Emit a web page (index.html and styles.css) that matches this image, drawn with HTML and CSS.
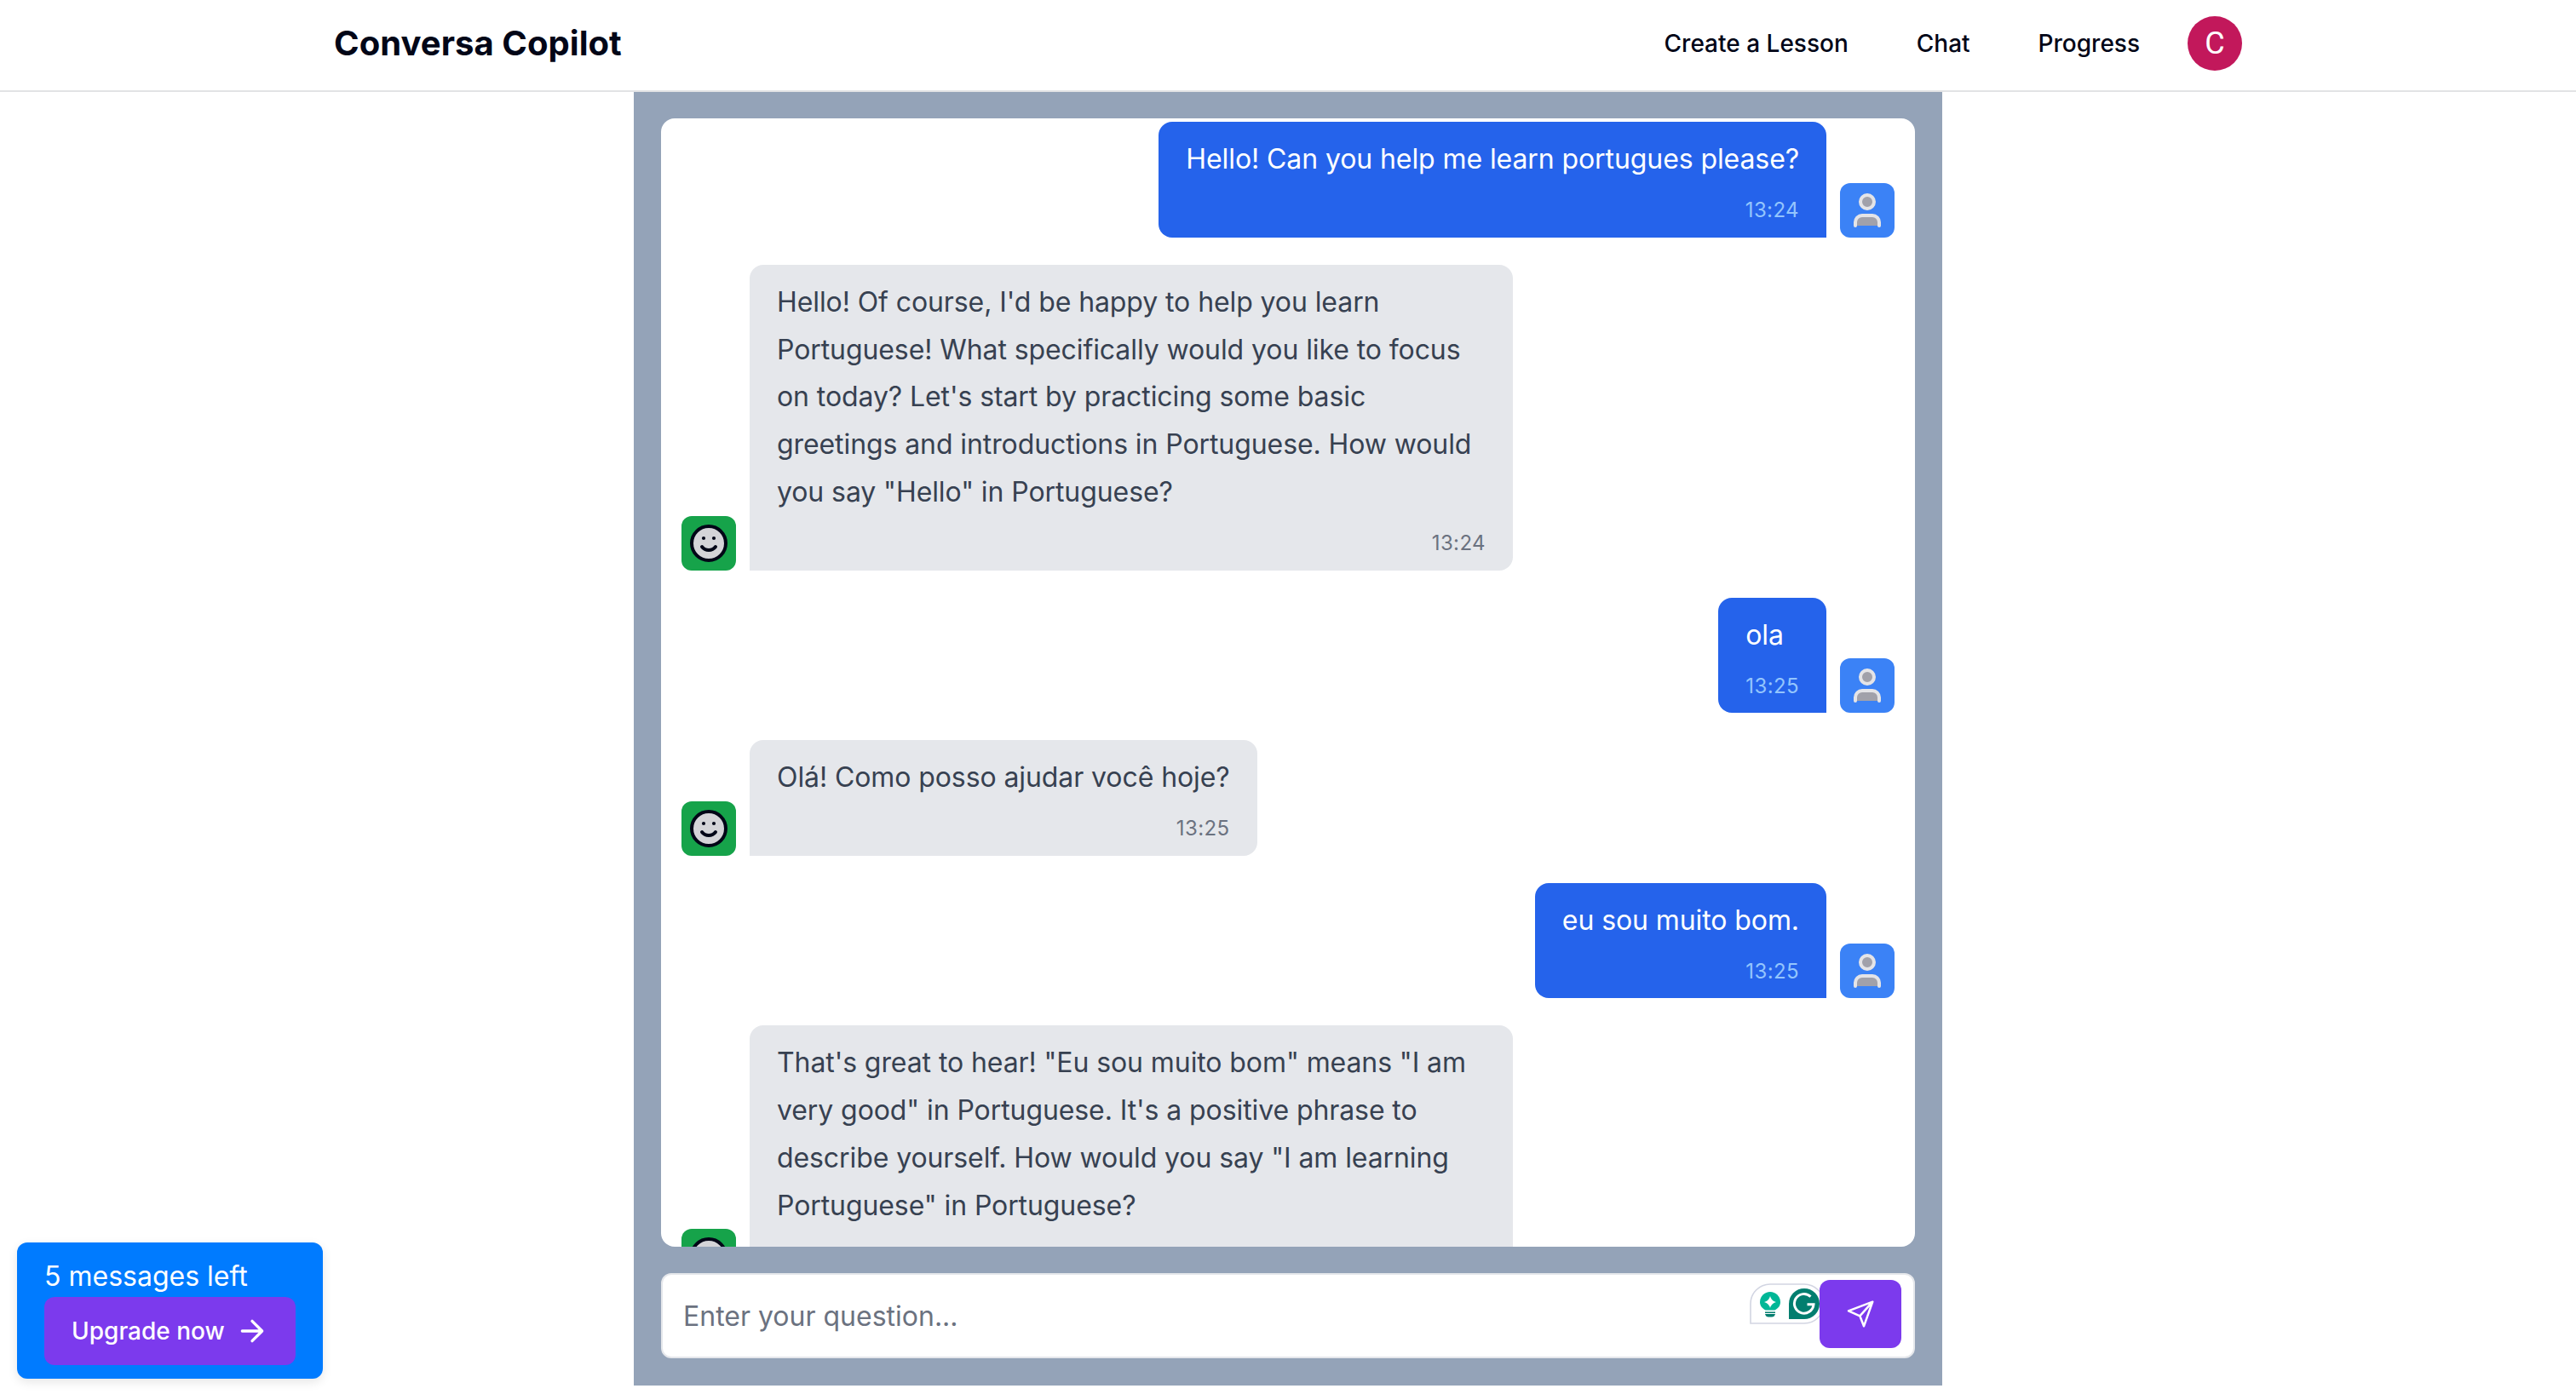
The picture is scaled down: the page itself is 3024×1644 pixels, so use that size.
FILE: index.html
```html
<!DOCTYPE html>
<html lang="en">
<head>
<meta charset="utf-8">
<title>Conversa Copilot</title>
<link rel="stylesheet" href="styles.css">
</head>
<body>
<svg width="0" height="0" class="defs" aria-hidden="true">
  <symbol id="person" viewBox="0 0 64 64">
    <circle cx="32" cy="22" r="8" fill="#a1a1aa" stroke="#e4e4e7" stroke-width="4"/>
    <path d="M18 50v-4a8 8 0 0 1 8-8h12a8 8 0 0 1 8 8v4" fill="#a1a1aa" stroke="#e4e4e7" stroke-width="4" stroke-linecap="round"/>
  </symbol>
  <symbol id="smile" viewBox="0 0 64 64">
    <circle cx="32" cy="32" r="20" fill="#d4d4d8" stroke="#020617" stroke-width="4"/>
    <path d="M24 36s3 4 8 4 8-4 8-4" fill="none" stroke="#020617" stroke-width="4" stroke-linecap="round"/>
    <circle cx="26" cy="26" r="2.1" fill="#020617"/><circle cx="38" cy="26" r="2.1" fill="#020617"/>
  </symbol>
</svg>
<header class="navbar">
  <div class="container">
    <a class="brand">Conversa Copilot</a>
    <nav class="links"><a>Create a Lesson</a><a>Chat</a><a>Progress</a><span class="account">C</span></nav>
  </div>
</header>
<main class="chat">
  <section class="messages">
    <div class="row user"><div class="bubble"><p>Hello! Can you help me learn portugues please?</p><time>13:24</time></div><svg class="avatar"><use href="#person"/></svg></div>
    <div class="row bot"><svg class="avatar"><use href="#smile"/></svg><div class="bubble"><p>Hello! Of course, I'd be happy to help you learn Portuguese! What specifically would you like to focus on today? Let's start by practicing some basic greetings and introductions in Portuguese. How would you say "Hello" in Portuguese?</p><time>13:24</time></div></div>
    <div class="row user"><div class="bubble"><p>ola</p><time>13:25</time></div><svg class="avatar"><use href="#person"/></svg></div>
    <div class="row bot"><svg class="avatar"><use href="#smile"/></svg><div class="bubble"><p>Olá! Como posso ajudar você hoje?</p><time>13:25</time></div></div>
    <div class="row user"><div class="bubble"><p>eu sou muito bom.</p><time>13:25</time></div><svg class="avatar"><use href="#person"/></svg></div>
    <div class="row bot"><svg class="avatar"><use href="#smile"/></svg><div class="bubble"><p>That's great to hear! "Eu sou muito bom" means "I am very good" in Portuguese. It's a positive phrase to describe yourself. How would you say "I am learning Portuguese" in Portuguese?</p></div></div>
  </section>
  <form class="composer">
    <span class="placeholder">Enter your question...</span>
    <svg class="assistant" viewBox="0 0 88 48">
      <path d="M1 47V24A23 23 0 0 1 24 1H64A23 23 0 0 1 64 47Z" fill="#fff" stroke="#d2d5e2" stroke-width="1.6"/>
      <path d="M18.6 31.5C14.8 29.6 12 26.4 12 22a12 12 0 0 1 24 0c0 4.4-2.800 7.600-6.600 9.500Z" fill="#00b797"/>
      <path d="M24 15q1.500 5.500 7 7-5.500 1.500-7 7-1.500-5.500-7-7 5.500-1.500 7-7Z" fill="#fff"/>
      <path d="M18 33.500h12v1.500H18ZM18 36h12q-1 3.500-4 3.500h-4q-3 0-4-3.500Z" fill="#027e6f"/>
      <path d="M46 42V24A18 18 0 1 1 64 42Z" fill="#027e6f"/>
      <path d="M71.500 15.600A11.300 11.300 0 1 0 75 24.800H67.500" fill="none" stroke="#fff" stroke-width="3"/>
    </svg>
    <button type="button" class="send"><svg width="32" height="32" viewBox="0 0 32 32" fill="none" stroke="#fff" stroke-width="2.500" stroke-linejoin="round"><path d="M30.300 1.700 2 12.300l13.300 6L20 30.300ZL15.300 18.300"/></svg></button>
  </form>
</main>
<aside class="quota">
  <span>5 messages left</span>
  <button type="button" class="upgrade">Upgrade now<svg width="40" height="40" viewBox="0 0 24 24" fill="none" stroke="#fff" stroke-width="2" stroke-linecap="round" stroke-linejoin="round"><path d="M5 12h14M12 5l7 7-7 7"/></svg></button>
</aside>
</body>
</html>
```
FILE: styles.css
```css
* { box-sizing: border-box; margin: 0; }
body { height: 1644px; overflow: hidden; background: #fff; color: #020617; font-family: Inter, "Liberation Sans", sans-serif; font-size: 32px; }
button { border: 0; font: inherit; color: #fff; }
svg { display: block; flex: none; }
.defs { position: absolute; }
.navbar { height: 107.500px; border-bottom: 2px solid #e2e3e5; }
.container { width: 2240px; height: 102px; margin: 0 auto; display: flex; align-items: center; justify-content: space-between; }
.brand { font-size: 40px; font-weight: 700; margin-top: -2px; letter-spacing: .05px; }
.links { display: flex; align-items: center; gap: 80px; font-size: 28px; font-weight: 500; }
.account { width: 64px; height: 64px; margin-left: -24px; border-radius: 50%; background: #c2185b; color: #fff; display: grid; place-items: center; font-size: 36px; font-weight: 400; font-family: Roboto, sans-serif; }
.chat { width: 1536px; height: 1519.300px; margin: 0 auto; padding: 31.800px 32px; background: #94a3b8; display: flex; flex-direction: column; gap: 31.800px; }
.messages { flex: 1; min-height: 0; overflow: hidden; background: #fff; border-radius: 16px; padding: 4px 24px 0; display: flex; flex-direction: column; gap: 32px; }
.row { display: flex; flex: none; align-items: flex-end; gap: 16px; }
.row:last-child { height: 303px; }
.row:last-child .bubble { align-self: stretch; }
.user { justify-content: flex-end; }
.avatar { width: 64px; height: 64px; border-radius: 12px; background: #3b82f6; }
.bot .avatar { background: #16a34a; }
.bubble { max-width: 896px; padding: 16px 32px; border-radius: 16px; background: #e5e7eb; color: #374151; line-height: 55.850px; letter-spacing: -.09px; }
.bubble time { display: block; margin-top: 16px; text-align: right; font-size: 24px; line-height: 31.650px; letter-spacing: .4px; color: #6b7280; }
.user .bubble { background: #2563eb; color: #fff; border-bottom-right-radius: 0; }
.user time { color: #93c5fd; }
.bot .bubble { border-bottom-left-radius: 0; }
.composer { flex: none; height: 99.700px; display: flex; align-items: center; padding: 0 14px 0 24px; background: #fff; border: 2px solid #e5e7eb; border-radius: 12px; }
.placeholder { flex: 1; color: #6b7280; }
.assistant { width: 88px; height: 48px; margin: -28px -6px 0 0; }
.send { position: relative; width: 96px; height: 80px; margin-bottom: 4px; border-radius: 12px; background: #7c3aed; display: grid; place-items: center; }
.quota { position: absolute; left: 20px; top: 1459px; width: 359px; height: 160px; padding: 16px 32px; border-radius: 12px; background: #007bff; color: #fff; line-height: 48px; box-shadow: 0 4px 12px rgba(0,0,0,.1); }
.upgrade { width: 295px; height: 80px; padding: 0 32px; border-radius: 12px; background: #7c3aed; display: flex; align-items: center; gap: 12px; font-size: 28px; font-weight: 500; white-space: nowrap; }
```
